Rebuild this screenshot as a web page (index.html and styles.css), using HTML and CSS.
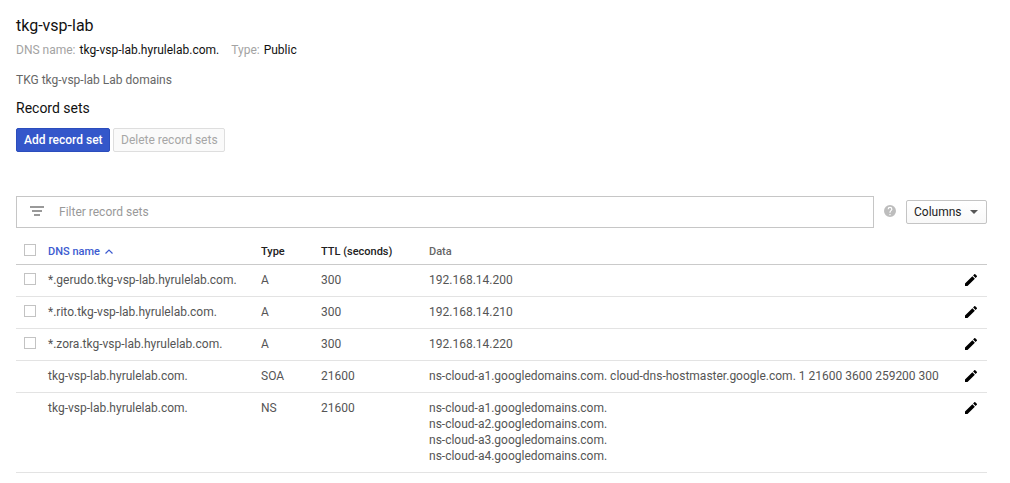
FILE: index.html
```html
<!DOCTYPE html>
<html lang="en">
<head>
<meta charset="utf-8">
<title>tkg-vsp-lab</title>
<link rel="stylesheet" href="styles.css">
</head>
<body>
<svg width="0" height="0" class="defs">
  <symbol id="pencil" viewBox="3 3 18 18"><path d="M3 17.25V21h3.75L17.81 9.94l-3.75-3.75L3 17.25zM20.71 7.04a1 1 0 0 0 0-1.41l-2.34-2.34a1 1 0 0 0-1.41 0l-1.83 1.83 3.75 3.75 1.83-1.83z"/></symbol>
</svg>
<main class="page">
  <h1 class="title">tkg-vsp-lab</h1>
  <div class="meta">
    <span class="meta-label">DNS name:</span><span class="meta-value meta-dns">tkg-vsp-lab.hyrulelab.com.</span>
    <span class="meta-label">Type:</span><span class="meta-value">Public</span>
  </div>
  <p class="description">TKG tkg-vsp-lab Lab domains</p>
  <h2 class="subtitle">Record sets</h2>
  <div class="actions">
    <button class="btn btn-primary">Add record set</button>
    <button class="btn btn-disabled">Delete record sets</button>
  </div>
  <div class="toolbar">
    <div class="filter">
      <svg width="14" height="10" viewBox="0 0 14 10"><path fill="#999" d="M0 0h14v2H0zM2 4h10v2H2zM4 8h6v2H4z"/></svg>
      <span class="filter-text">Filter record sets</span>
    </div>
    <svg class="help" width="12" height="12" viewBox="2 2 20 20"><path fill="#bdbdbd" d="M12 2a10 10 0 1 0 0 20 10 10 0 0 0 0-20zm1 17h-2v-2h2v2zm2.07-7.75-.9.92C13.45 12.9 13 13.5 13 15h-2v-.5c0-1.1.45-2.1 1.17-2.83l1.24-1.26c.37-.36.59-.86.59-1.41a2 2 0 1 0-4 0H8a4 4 0 1 1 8 0c0 .88-.36 1.68-.93 2.25z"/></svg>
    <button class="btn btn-columns"><span>Columns</span><svg width="8" height="4" viewBox="0 0 8 4"><path fill="#555" d="M0 0h8L4 4z"/></svg></button>
  </div>
  <div class="table">
    <div class="row head">
      <span class="check"></span>
      <span class="sorted">DNS name<svg width="8" height="5" viewBox="0 0 8 5"><path fill="none" stroke="#3d5bd0" stroke-width="1.2" d="M.5 4.5 4 1l3.5 3.5"/></svg></span>
      <span>Type</span><span>TTL (seconds)</span><span class="muted">Data</span><span></span>
    </div>
    <div class="row">
      <span class="check"></span><span>*.gerudo.tkg-vsp-lab.hyrulelab.com.</span><span>A</span><span>300</span><span>192.168.14.200</span><svg class="edit"><use href="#pencil"/></svg>
    </div>
    <div class="row">
      <span class="check"></span><span>*.rito.tkg-vsp-lab.hyrulelab.com.</span><span>A</span><span>300</span><span>192.168.14.210</span><svg class="edit"><use href="#pencil"/></svg>
    </div>
    <div class="row">
      <span class="check"></span><span>*.zora.tkg-vsp-lab.hyrulelab.com.</span><span>A</span><span>300</span><span>192.168.14.220</span><svg class="edit"><use href="#pencil"/></svg>
    </div>
    <div class="row">
      <span></span><span>tkg-vsp-lab.hyrulelab.com.</span><span>SOA</span><span>21600</span><span>ns-cloud-a1.googledomains.com. cloud-dns-hostmaster.google.com. 1 21600 3600 259200 300</span><svg class="edit"><use href="#pencil"/></svg>
    </div>
    <div class="row">
      <span></span><span>tkg-vsp-lab.hyrulelab.com.</span><span>NS</span><span>21600</span><span>ns-cloud-a1.googledomains.com.<br>ns-cloud-a2.googledomains.com.<br>ns-cloud-a3.googledomains.com.<br>ns-cloud-a4.googledomains.com.</span><svg class="edit"><use href="#pencil"/></svg>
    </div>
  </div>
</main>
</body>
</html>
```
FILE: styles.css
```css
* { box-sizing: border-box; }
body { margin: 0; background: #fff; font: 12px/16px Roboto, sans-serif; color: #555; }
.defs { display: block; }
.page { width: 987px; padding: 16px 0 0 16px; white-space: nowrap; }
.title { margin: 0; font-size: 16px; line-height: 20px; font-weight: 400; color: #111; }
.meta { display: flex; margin-top: 6px; }
.meta-label { color: #a3a3a3; margin-right: 4px; }
.meta-value { color: #111; }
.meta-dns { margin-right: 12px; }
.description { margin: 14px 0 0; color: #666; }
.subtitle { margin: 11px 0 0; font-size: 14px; line-height: 18px; font-weight: 400; color: #111; }
.actions { display: flex; gap: 3px; margin-top: 11px; }
.btn { display: flex; align-items: center; height: 24px; padding: 0 7px; border: 1px solid #c4c4c4; border-radius: 2px; font: 12px/16px Roboto, sans-serif; white-space: nowrap; }
.btn-primary { width: 94px; background: #3457ca; border-color: #2b4dbd; color: #fff; font-weight: 500; }
.btn-disabled { width: 112px; background: #fafafa; border-color: #dedede; color: #a6a6a6; }
.toolbar { display: flex; align-items: center; margin-top: 44px; }
.filter { display: flex; align-items: center; width: 858px; height: 32px; padding-left: 13px; border: 1px solid #c6c6c6; color: #999; }
.filter svg { margin: -2px 15px 0 0; }
.help { margin: -2px 10px 0; }
.btn-columns { width: 81px; justify-content: space-between; background: linear-gradient(#fff, #f8f8f8); color: #222; margin-left: auto; padding-right: 8px; }
.row { display: grid; grid-template-columns: 24px 213px 60px 108px 536px 1fr; padding: 7px 0 8px 8px; border-bottom: 1px solid #e3e3e3; align-items: start; }
.head { height: 37px; padding-top: 16px; border-color: #cacaca; font-size: 11px; font-weight: 500; color: #222; }
.check { width: 12px; height: 12px; margin-top: 1px; border: 1px solid #c3c3c3; }
.head .check { margin-top: 0; }
.sorted { color: #3d5bd0; }
.sorted svg { margin-left: 5px; vertical-align: 1px; }
.muted { color: #666; }
.edit { width: 12px; height: 12px; margin-top: 2px; fill: #000; }
```
